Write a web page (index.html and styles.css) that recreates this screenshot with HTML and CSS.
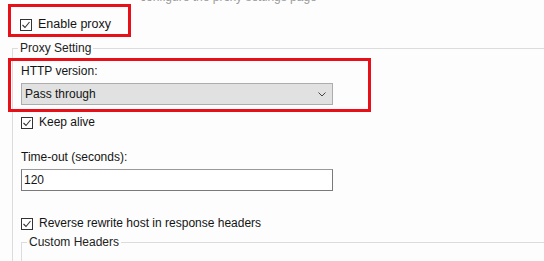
FILE: index.html
```html
<!DOCTYPE html>
<html lang="en">
<head>
  <meta charset="UTF-8">
  <meta name="viewport" content="width=device-width, initial-scale=1.0">
  <title>Proxy Setting</title>
  <link rel="stylesheet" href="styles.css">
</head>
<body>

  <!-- 상단 안내 문구 (잘린 줄) -->
  <div class="intro"><span>configure the proxy settings page</span></div>

  <!-- 프록시 사용 -->
  <div class="mark mark_enable">
    <label class="check check_big">
      <svg viewBox="0 0 12 12"><rect x="0.5" y="0.5" width="11" height="11"/><polyline points="2.5,6 5,8.5 9.5,3"/></svg>
      <span>Enable proxy</span>
    </label>
  </div>

  <!-- 프록시 설정 -->
  <fieldset class="group">
    <legend>Proxy Setting</legend>

    <div class="mark mark_version">
      <div class="field_label">HTTP version:</div>
      <div class="select">
        <span>Pass through</span>
        <svg viewBox="0 0 8 5"><polyline points="0.5,0.5 4,4 7.5,0.5"/></svg>
      </div>
    </div>

    <label class="check row_keep">
      <svg viewBox="0 0 12 12"><rect x="0.5" y="0.5" width="11" height="11"/><polyline points="2.5,6 5,8.5 9.5,3"/></svg>
      <span>Keep alive</span>
    </label>

    <div class="field_label row_timeout">Time-out (seconds):</div>
    <div class="input">120</div>

    <label class="check row_reverse">
      <svg viewBox="0 0 12 12"><rect x="0.5" y="0.5" width="11" height="11"/><polyline points="2.5,6 5,8.5 9.5,3"/></svg>
      <span>Reverse rewrite host in response headers</span>
    </label>

    <!-- 커스텀 헤더 -->
    <fieldset class="group group_inner">
      <legend>Custom Headers</legend>
    </fieldset>
  </fieldset>

</body>
</html>
```

FILE: styles.css
```css
:root {
    --ui-font: "Liberation Sans", Arial, sans-serif;
    --txt: rgba(20, 20, 20, 1);
    --line: rgba(220, 220, 220, 1);
    --red: rgba(232, 16, 24, 1);
}

body {margin: 0; height: 261px; overflow: hidden; background: #fdfdfd; font-family: var(--ui-font); font-size: 12px; color: var(--txt);}

/* 잘린 안내 문구 */
.intro {height: 4px; overflow: hidden; margin-left: 140px; color: #9a9a9a; line-height: 14px;}
.intro span {display: block; margin-top: -10px; white-space: nowrap;}

/* 빨간 강조 박스 */
.mark {border: 3px solid var(--red); box-sizing: border-box;}
.mark_enable {width: 123px; height: 33px; margin-left: 8px; padding: 9px 0 0 9px;}
.mark_version {width: 363px; margin: 3px 0 0 -13px; padding: 3px 0 4px 10px;}

/* 체크박스 */
.check {display: flex; align-items: center; gap: 6px; height: 15px; line-height: 15px;}
.check svg {width: 12px; height: 12px; flex: none;}
.check rect {fill: #fff; stroke: #333;}
.check polyline {fill: none; stroke: #333; stroke-width: 1.1;}
.check_big {height: 17px; font-size: 12.5px;}

/* 그룹 박스 */
.group {margin: 4px 0 0 12px; padding: 0 0 0 8px; border: none; border-top: 1px solid var(--line); border-left: 1px solid var(--line); min-width: 0;}
.group legend {margin-left: -3px; padding: 0 2px; line-height: 14px; color: #222;}
.group_inner {margin: 4px 0 0 0; padding: 0; height: 26px; box-sizing: border-box;}
.group_inner legend {margin-left: 5px;}

/* 입력 요소 */
.field_label {line-height: 15px;}
.select {width: 312px; height: 22px; margin-top: 4px; box-sizing: border-box; background: #e1e1e1; border: 1px solid #adadad; display: flex; align-items: center; justify-content: space-between; padding: 0 6px 0 3px;}
.select svg {width: 8px; height: 5px;}
.select polyline {fill: none; stroke: #444; stroke-width: 1;}
.input {width: 312px; height: 22px; margin-top: 4px; box-sizing: border-box; border: 1px solid #7a7a7a; border-top-color: #999; padding-left: 2px; line-height: 20px; background: #fff;}

.row_keep {margin-top: 3px;}
.row_timeout {margin-top: 20px;}
.row_reverse {margin-top: 25px;}
```
